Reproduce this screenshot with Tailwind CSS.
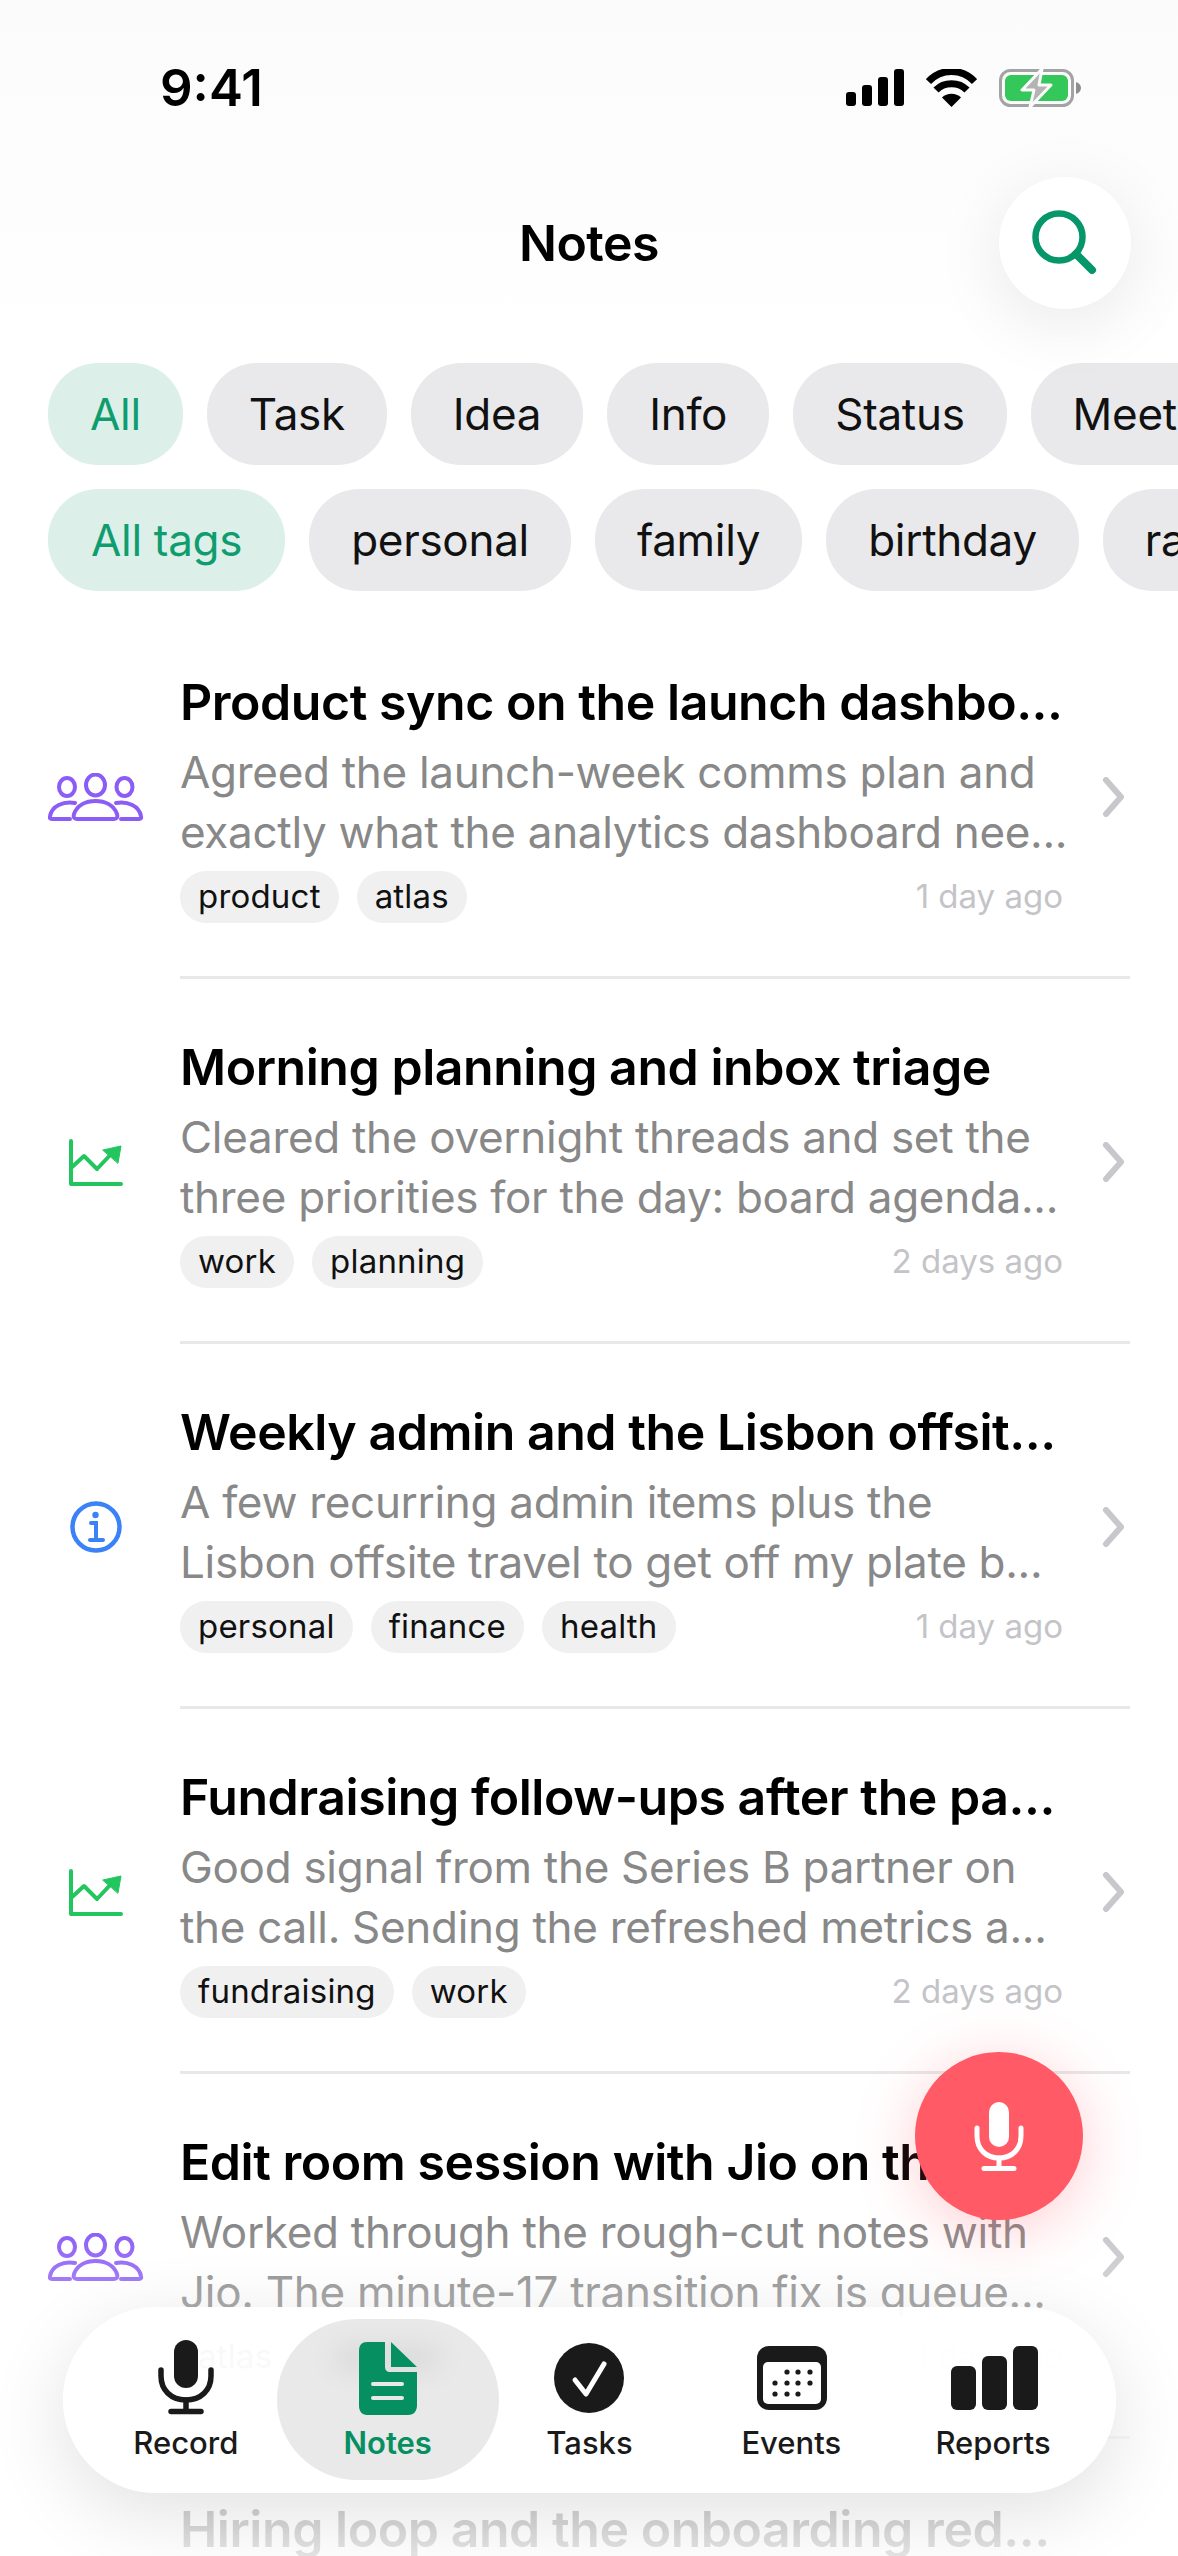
<!DOCTYPE html>
<html lang="en">
<head>
    <meta charset="UTF-8">
    <meta name="viewport" content="width=device-width, initial-scale=1.0">
    <title>Notes</title>
    <script src="https://cdn.jsdelivr.net/npm/@tailwindcss/browser@4"></script>
</head>
<body class="bg-white font-[family-name:Inter,sans-serif] text-[#111]">
<div class="relative w-[1178px] h-[2556px] overflow-hidden bg-white">

    <!-- Status bar + header -->
    <header class="bg-gradient-to-b from-[#fbfbfb] to-white h-[363px]">
        <div class="flex justify-between items-center h-[177px] pl-[160px] pr-[97px] pb-[2px]">
            <span class="text-[51px] leading-none font-semibold text-black">9:41</span>
            <div class="flex items-center gap-[22px]">
                <svg width="58" height="37" viewBox="0 0 58 37" fill="#000">
                    <rect x="0" y="23" width="10" height="14" rx="3"/>
                    <rect x="16" y="16" width="10" height="21" rx="3"/>
                    <rect x="32" y="8" width="10" height="29" rx="3"/>
                    <rect x="48" y="0" width="10" height="37" rx="3"/>
                </svg>
                <svg width="51" height="38" viewBox="0 0 51 38">
                    <path d="M25.5 38 L16 28.5 C21 23.5 30 23.5 35 28.5 Z" fill="#000"/>
                    <path d="M10 21 C18 12.5 33 12.5 41 21" fill="none" stroke="#000" stroke-width="7"/>
                    <path d="M2.5 12.5 C15 -1 36 -1 48.5 12.5" fill="none" stroke="#000" stroke-width="7"/>
                </svg>
                <svg width="82" height="40" viewBox="0 0 82 40">
                    <rect x="1.5" y="2.5" width="72" height="35" rx="10" fill="none" stroke="#a3a3a3" stroke-width="3"/>
                    <rect x="6" y="7" width="63" height="26" rx="6" fill="#34c759"/>
                    <path d="M77 14 C80 15 82 17 82 20 C82 23 80 25 77 26 Z" fill="#8e8e8e"/>
                    <path d="M43 1 L23 22 L35 22 L31 39 L52 17 L40 17 Z" fill="#b4b4b4" stroke="#fbfbfb" stroke-width="3" stroke-linejoin="round"/>
                </svg>
            </div>
        </div>
        <div class="relative flex items-center justify-center h-[132px]">
            <h1 class="text-[50px] leading-none font-semibold tracking-[-0.5px] text-black">Notes</h1>
            <button class="absolute right-[47px] top-0 w-[132px] h-[132px] rounded-full bg-white shadow-[0_14px_70px_rgba(0,0,0,0.09)] flex items-center justify-center">
                <svg width="132" height="132" viewBox="0 0 132 132" fill="none" stroke="#059669" stroke-width="6.5" stroke-linecap="round">
                    <circle cx="60" cy="60" r="23.5"/>
                    <path d="M77 77 L93 93" stroke-width="8"/>
                </svg>
            </button>
        </div>
    </header>

    <!-- Filter chips -->
    <div class="flex flex-col gap-[24px] pl-[48px] text-[44px] tracking-[-0.3px] leading-none whitespace-nowrap">
        <div class="flex gap-[24px]">
            <span class="h-[102px] flex items-center rounded-[50px] px-[42px] bg-[#dcf0e9] text-[#0f9d6f]">All</span>
            <span class="h-[102px] flex items-center rounded-[50px] px-[42px] bg-[#e9e9eb]">Task</span>
            <span class="h-[102px] flex items-center rounded-[50px] px-[42px] bg-[#e9e9eb]">Idea</span>
            <span class="h-[102px] flex items-center rounded-[50px] px-[42px] bg-[#e9e9eb]">Info</span>
            <span class="h-[102px] flex items-center rounded-[50px] px-[42px] bg-[#e9e9eb]">Status</span>
            <span class="h-[102px] flex items-center rounded-[50px] px-[42px] bg-[#e9e9eb]">Meeting</span>
        </div>
        <div class="flex gap-[24px]">
            <span class="h-[102px] flex items-center rounded-[50px] px-[43px] bg-[#dcf0e9] text-[#0f9d6f]">All tags</span>
            <span class="h-[102px] flex items-center rounded-[50px] px-[42px] bg-[#e9e9eb]">personal</span>
            <span class="h-[102px] flex items-center rounded-[50px] px-[42px] bg-[#e9e9eb]">family</span>
            <span class="h-[102px] flex items-center rounded-[50px] px-[42px] bg-[#e9e9eb]">birthday</span>
            <span class="h-[102px] flex items-center rounded-[50px] px-[42px] bg-[#e9e9eb]">random</span>
        </div>
    </div>

    <!-- Notes list -->
    <main class="mt-[23px] whitespace-nowrap">

        <article class="flex items-center h-[365px] pl-[48px]">
            <div class="w-[96px] flex justify-center shrink-0">
                <svg width="96" height="48" viewBox="0 0 96 48" fill="none" stroke="#8b5cf6" stroke-width="4" stroke-linecap="round">
                    <ellipse cx="47.5" cy="12" rx="9.5" ry="10.5"/>
                    <ellipse cx="19" cy="14" rx="8" ry="9"/>
                    <ellipse cx="76.5" cy="14" rx="8" ry="9"/>
                    <path d="M29 46 H66 C69 46 70 44 69 41 C66 32 57 28 47.5 28 C38 28 29 32 26 41 C25 44 26 46 29 46 Z"/>
                    <path d="M27 30 C15 28 4 33 2 43 C1.500 45 2 46 4 46 H22"/>
                    <path d="M68 30 C80 28 91 33 93 43 C93.500 45 93 46 91 46 H73"/>
                </svg>
            </div>
            <div class="ml-[36px] flex-1 h-full flex items-center border-b-[3px] border-[#e8e8e8] mr-[48px]">
                <div class="w-[883px] shrink-0 pt-[2px]">
                    <h2 class="text-[50px] leading-[66px] font-semibold tracking-[-0.45px] text-black">Product sync on the launch dashbo...</h2>
                    <p class="mt-[7px] text-[44px] tracking-[-0.3px] leading-[60px] text-[#888]">Agreed the launch-week comms plan and</p>
                    <p class="text-[44px] tracking-[-0.3px] leading-[60px] text-[#888]">exactly what the analytics dashboard nee...</p>
                    <div class="mt-[9px] flex items-center gap-[18px]">
                        <span class="h-[52px] flex items-center rounded-full px-[18px] bg-[#f0f0f0] text-[33px] tracking-[0.2px]">product</span>
                        <span class="h-[52px] flex items-center rounded-full px-[18px] bg-[#f0f0f0] text-[33px] tracking-[0.2px]">atlas</span>
                        <span class="ml-auto text-[33px] text-[#c4c4c8]">1 day ago</span>
                    </div>
                </div>
                <svg class="ml-[37px] mt-[3px]" width="26" height="40" viewBox="0 0 26 40" fill="none" stroke="#c7c7cc" stroke-width="6" stroke-linecap="round" stroke-linejoin="round"><path d="M6 3 L21 20 L6 37"/></svg>
            </div>
        </article>

        <article class="flex items-center h-[365px] pl-[48px]">
            <div class="w-[96px] flex justify-center shrink-0">
                <svg class="mt-[2px]" width="56" height="48" viewBox="0 0 56 48" fill="none" stroke="#22c55e" stroke-width="4" stroke-linecap="round" stroke-linejoin="round">
                    <path d="M3 2 V45 H53"/>
                    <path d="M3 29 L16 17 L29 30 L45 13"/>
                    <path d="M35 11 L53 7 L50 24 Z" fill="#22c55e" stroke-width="1"/>
                </svg>
            </div>
            <div class="ml-[36px] flex-1 h-full flex items-center border-b-[3px] border-[#e8e8e8] mr-[48px]">
                <div class="w-[883px] shrink-0 pt-[2px]">
                    <h2 class="text-[50px] leading-[66px] font-semibold tracking-[-0.45px] text-black">Morning planning and inbox triage</h2>
                    <p class="mt-[7px] text-[44px] tracking-[-0.3px] leading-[60px] text-[#888]">Cleared the overnight threads and set the</p>
                    <p class="text-[44px] tracking-[-0.3px] leading-[60px] text-[#888]">three priorities for the day: board agenda...</p>
                    <div class="mt-[9px] flex items-center gap-[18px]">
                        <span class="h-[52px] flex items-center rounded-full px-[18px] bg-[#f0f0f0] text-[33px] tracking-[0.2px]">work</span>
                        <span class="h-[52px] flex items-center rounded-full px-[18px] bg-[#f0f0f0] text-[33px] tracking-[0.2px]">planning</span>
                        <span class="ml-auto text-[33px] text-[#c4c4c8]">2 days ago</span>
                    </div>
                </div>
                <svg class="ml-[37px] mt-[3px]" width="26" height="40" viewBox="0 0 26 40" fill="none" stroke="#c7c7cc" stroke-width="6" stroke-linecap="round" stroke-linejoin="round"><path d="M6 3 L21 20 L6 37"/></svg>
            </div>
        </article>

        <article class="flex items-center h-[365px] pl-[48px]">
            <div class="w-[96px] flex justify-center shrink-0">
                <svg width="52" height="52" viewBox="0 0 52 52" fill="none" stroke="#3b82f6" stroke-width="4.500" stroke-linecap="round">
                    <circle cx="26" cy="26" r="23.500"/>
                    <circle cx="25.500" cy="14" r="3.200" fill="#3b82f6" stroke="none"/>
                    <path d="M21 22 H26 V39 M20 39 H33" stroke-width="4"/>
                </svg>
            </div>
            <div class="ml-[36px] flex-1 h-full flex items-center border-b-[3px] border-[#e8e8e8] mr-[48px]">
                <div class="w-[883px] shrink-0 pt-[2px]">
                    <h2 class="text-[50px] leading-[66px] font-semibold tracking-[-0.45px] text-black">Weekly admin and the Lisbon offsit...</h2>
                    <p class="mt-[7px] text-[44px] tracking-[-0.3px] leading-[60px] text-[#888]">A few recurring admin items plus the</p>
                    <p class="text-[44px] tracking-[-0.3px] leading-[60px] text-[#888]">Lisbon offsite travel to get off my plate b...</p>
                    <div class="mt-[9px] flex items-center gap-[18px]">
                        <span class="h-[52px] flex items-center rounded-full px-[18px] bg-[#f0f0f0] text-[33px] tracking-[0.2px]">personal</span>
                        <span class="h-[52px] flex items-center rounded-full px-[18px] bg-[#f0f0f0] text-[33px] tracking-[0.2px]">finance</span>
                        <span class="h-[52px] flex items-center rounded-full px-[18px] bg-[#f0f0f0] text-[33px] tracking-[0.2px]">health</span>
                        <span class="ml-auto text-[33px] text-[#c4c4c8]">1 day ago</span>
                    </div>
                </div>
                <svg class="ml-[37px] mt-[3px]" width="26" height="40" viewBox="0 0 26 40" fill="none" stroke="#c7c7cc" stroke-width="6" stroke-linecap="round" stroke-linejoin="round"><path d="M6 3 L21 20 L6 37"/></svg>
            </div>
        </article>

        <article class="flex items-center h-[365px] pl-[48px]">
            <div class="w-[96px] flex justify-center shrink-0">
                <svg class="mt-[2px]" width="56" height="48" viewBox="0 0 56 48" fill="none" stroke="#22c55e" stroke-width="4" stroke-linecap="round" stroke-linejoin="round">
                    <path d="M3 2 V45 H53"/>
                    <path d="M3 29 L16 17 L29 30 L45 13"/>
                    <path d="M35 11 L53 7 L50 24 Z" fill="#22c55e" stroke-width="1"/>
                </svg>
            </div>
            <div class="ml-[36px] flex-1 h-full flex items-center border-b-[3px] border-[#e8e8e8] mr-[48px]">
                <div class="w-[883px] shrink-0 pt-[2px]">
                    <h2 class="text-[50px] leading-[66px] font-semibold tracking-[-0.45px] text-black">Fundraising follow-ups after the pa...</h2>
                    <p class="mt-[7px] text-[44px] tracking-[-0.3px] leading-[60px] text-[#888]">Good signal from the Series B partner on</p>
                    <p class="text-[44px] tracking-[-0.3px] leading-[60px] text-[#888]">the call. Sending the refreshed metrics a...</p>
                    <div class="mt-[9px] flex items-center gap-[18px]">
                        <span class="h-[52px] flex items-center rounded-full px-[18px] bg-[#f0f0f0] text-[33px] tracking-[0.2px]">fundraising</span>
                        <span class="h-[52px] flex items-center rounded-full px-[18px] bg-[#f0f0f0] text-[33px] tracking-[0.2px]">work</span>
                        <span class="ml-auto text-[33px] text-[#c4c4c8]">2 days ago</span>
                    </div>
                </div>
                <svg class="ml-[37px] mt-[3px]" width="26" height="40" viewBox="0 0 26 40" fill="none" stroke="#c7c7cc" stroke-width="6" stroke-linecap="round" stroke-linejoin="round"><path d="M6 3 L21 20 L6 37"/></svg>
            </div>
        </article>

        <article class="flex items-center h-[365px] pl-[48px]">
            <div class="w-[96px] flex justify-center shrink-0">
                <svg width="96" height="48" viewBox="0 0 96 48" fill="none" stroke="#8b5cf6" stroke-width="4" stroke-linecap="round">
                    <ellipse cx="47.5" cy="12" rx="9.5" ry="10.5"/>
                    <ellipse cx="19" cy="14" rx="8" ry="9"/>
                    <ellipse cx="76.5" cy="14" rx="8" ry="9"/>
                    <path d="M29 46 H66 C69 46 70 44 69 41 C66 32 57 28 47.5 28 C38 28 29 32 26 41 C25 44 26 46 29 46 Z"/>
                    <path d="M27 30 C15 28 4 33 2 43 C1.500 45 2 46 4 46 H22"/>
                    <path d="M68 30 C80 28 91 33 93 43 C93.500 45 93 46 91 46 H73"/>
                </svg>
            </div>
            <div class="ml-[36px] flex-1 h-full flex items-center border-b-[3px] border-[#e8e8e8] mr-[48px]">
                <div class="w-[883px] shrink-0 pt-[2px]">
                    <h2 class="text-[50px] leading-[66px] font-semibold tracking-[-0.45px] text-black">Edit room session with Jio on the cut</h2>
                    <p class="mt-[7px] text-[44px] tracking-[-0.3px] leading-[60px] text-[#888]">Worked through the rough-cut notes with</p>
                    <p class="text-[44px] tracking-[-0.3px] leading-[60px] text-[#888]">Jio. The minute-17 transition fix is queue...</p>
                    <div class="mt-[9px] flex items-center gap-[18px]">
                        <span class="h-[52px] flex items-center rounded-full px-[18px] bg-[#f0f0f0] text-[33px] tracking-[0.2px]">atlas</span>
                        <span class="h-[52px] flex items-center rounded-full px-[18px] bg-[#f0f0f0] text-[33px] tracking-[0.2px]">work</span>
                        <span class="ml-auto text-[33px] text-[#c4c4c8]">1 day ago</span>
                    </div>
                </div>
                <svg class="ml-[37px] mt-[3px]" width="26" height="40" viewBox="0 0 26 40" fill="none" stroke="#c7c7cc" stroke-width="6" stroke-linecap="round" stroke-linejoin="round"><path d="M6 3 L21 20 L6 37"/></svg>
            </div>
        </article>

        <article class="flex h-[365px] pl-[180px] pt-[57px]">
            <h2 class="text-[50px] leading-[66px] font-semibold tracking-[-0.45px] text-black">Hiring loop and the onboarding red...</h2>
        </article>
    </main>

    <!-- Fade over the bottom of the list -->
    <div class="absolute inset-x-0 bottom-0 h-[330px] bg-gradient-to-b from-white/0 via-white/60 to-white/90"></div>

    <!-- Record button -->
    <button class="absolute left-[915px] top-[2052px] w-[168px] h-[168px] rounded-full bg-[#ff5a66] shadow-[0_10px_60px_rgba(255,90,102,0.3)]">
        <svg class="block" width="168" height="168" viewBox="0 0 168 168" fill="none" stroke="#fff" stroke-linecap="round">
            <rect x="74" y="50" width="20" height="45" rx="10" fill="#fff" stroke="none"/>
            <path d="M62 76 V84 C62 97 71 106 84 106 C97 106 106 97 106 84 V76" stroke-width="5"/>
            <path d="M84 106 V116 M69 116.500 H99" stroke-width="5"/>
        </svg>
    </button>

    <!-- Tab bar -->
    <nav class="absolute left-[63px] top-[2307px] w-[1053px] h-[186px] rounded-[93px] bg-white/95 shadow-[0_20px_80px_rgba(0,0,0,0.12)] grid grid-cols-5 px-[22px] pt-[33px] items-start text-[31px] leading-none font-medium text-[#1a1a1a]">
        <div class="flex flex-col items-center">
            <svg width="60" height="76" viewBox="0 0 60 76" fill="none" stroke="#1a1a1a" stroke-linecap="round">
                <rect x="18" y="0" width="24" height="48" rx="12" fill="#1a1a1a" stroke="none"/>
                <path d="M5 30 V36 C5 50 15 60 30 60 C45 60 55 50 55 36 V30" stroke-width="5.500"/>
                <path d="M30 60 V71 M15 71.500 H45" stroke-width="5.500"/>
            </svg>
            <span class="mt-[11px]">Record</span>
        </div>
        <div class="relative flex flex-col items-center text-[#068f60] font-semibold">
            <span class="absolute -inset-x-[10px] -top-[21px] -bottom-[22px] rounded-[80px] bg-[#e9e9e9] overflow-hidden">
                <span class="absolute left-[55px] top-[24px] w-[110px] h-[30px] rounded-full bg-black/5 blur-md"></span>
            </span>
            <svg class="relative" width="60" height="76" viewBox="0 0 60 76">
                <path d="M9 2 H27 V27 C27 30 29 32 32 32 H59 V65 C59 71 56 75 50 75 H9 C4 75 1 71 1 66 V11 C1 5 4 2 9 2 Z" fill="#068f60"/>
                <path d="M33 2 L59 27 H33 Z" fill="#068f60"/>
                <path d="M15 44 H44 M15 58 H44" stroke="#e9e9e9" stroke-width="4" stroke-linecap="round"/>
            </svg>
            <span class="relative mt-[11px]">Notes</span>
        </div>
        <div class="flex flex-col items-center">
            <svg width="70" height="76" viewBox="0 0 70 76" fill="none">
                <circle cx="35" cy="38" r="35" fill="#1a1a1a"/>
                <path d="M21 40 L32 54 L50 24" stroke="#fff" stroke-width="5" stroke-linecap="round" stroke-linejoin="round"/>
            </svg>
            <span class="mt-[11px]">Tasks</span>
        </div>
        <div class="flex flex-col items-center">
            <svg width="74" height="76" viewBox="0 0 74 76">
                <rect x="3" y="6" width="70" height="64" rx="12" fill="#1a1a1a"/>
                <rect x="9" y="22" width="58" height="42" rx="5" fill="#fff"/>
                <g fill="#1a1a1a">
                    <circle cx="33" cy="32" r="2.600"/><circle cx="44" cy="32" r="2.600"/><circle cx="56" cy="32" r="2.600"/>
                    <circle cx="21" cy="43" r="2.600"/><circle cx="33" cy="43" r="2.600"/><circle cx="44" cy="43" r="2.600"/><circle cx="56" cy="43" r="2.600"/>
                    <circle cx="21" cy="54" r="2.600"/><circle cx="33" cy="54" r="2.600"/><circle cx="44" cy="54" r="2.600"/>
                </g>
            </svg>
            <span class="mt-[11px]">Events</span>
        </div>
        <div class="flex flex-col items-center">
            <svg width="92" height="76" viewBox="0 0 92 76" fill="#1a1a1a">
                <rect x="4" y="26" width="25" height="44" rx="6"/>
                <rect x="35" y="16" width="25" height="54" rx="6"/>
                <rect x="66" y="6" width="25" height="64" rx="6"/>
            </svg>
            <span class="mt-[11px]">Reports</span>
        </div>
    </nav>
</div>
</body>
</html>
